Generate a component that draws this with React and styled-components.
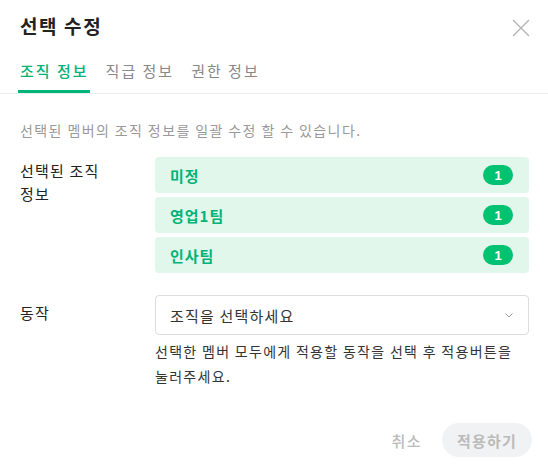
import React from "react";
import styled, { createGlobalStyle } from "styled-components";

const orgs = [
  { name: "미정", count: 1 },
  { name: "영업1팀", count: 1 },
  { name: "인사팀", count: 1 },
];

const tabs = ["조직 정보", "직급 정보", "권한 정보"];

const App = () => {
  return (
    <>
      <GlobalStyle />
      <Dialog>
        <Header>
          <Title>선택 수정</Title>
          <CloseButton aria-label="닫기">
            <svg width="18" height="18" viewBox="0 0 18 18">
              <path d="M1 1 L17 17 M17 1 L1 17" stroke="#b5b5b5" strokeWidth="1.4" fill="none" />
            </svg>
          </CloseButton>
        </Header>
        <TabBar>
          {tabs.map((t, i) => (
            <Tab key={t} active={i === 0}>
              {t}
            </Tab>
          ))}
        </TabBar>
        <Body>
          <Description>선택된 멤버의 조직 정보를 일괄 수정 할 수 있습니다.</Description>
          <FormRow>
            <Label>선택된 조직 정보</Label>
            <OrgList>
              {orgs.map((o) => (
                <OrgItem key={o.name}>
                  <span>{o.name}</span>
                  <Badge>{o.count}</Badge>
                </OrgItem>
              ))}
            </OrgList>
          </FormRow>
          <FormRow>
            <Label className="action">동작</Label>
            <div>
              <Select>
                <span>조직을 선택하세요</span>
                <svg width="8" height="5" viewBox="0 0 8 5">
                  <path d="M0.5 0.5 L4 4 L7.5 0.5" stroke="#999" strokeWidth="1" fill="none" />
                </svg>
              </Select>
              <Help>선택한 멤버 모두에게 적용할 동작을 선택 후 적용버튼을 눌러주세요.</Help>
            </div>
          </FormRow>
        </Body>
        <Footer>
          <TextButton>취소</TextButton>
          <ApplyButton disabled>적용하기</ApplyButton>
        </Footer>
      </Dialog>
    </>
  );
};

export default App;

const GlobalStyle = createGlobalStyle`
  body {
    margin: 0;
    background: #fff;
    font-family: "Noto Sans CJK KR", "Noto Sans", sans-serif;
    word-break: keep-all;
  }
`;

const Dialog = styled.div`
  width: 548px;
  height: 472px;
  display: flex;
  flex-direction: column;
  box-sizing: border-box;
  background: #fff;
`;

const Header = styled.div`
  display: flex;
  justify-content: space-between;
  align-items: center;
  padding: 11px 18px 0 20px;
  height: 30px;
`;

const Title = styled.h2`
  margin: 0;
  font-size: 19px;
  font-weight: 700;
  letter-spacing: 1.6px;
  color: #222;
  line-height: 28px;
`;

const CloseButton = styled.button`
  border: 0;
  background: none;
  padding: 0;
  width: 18px;
  height: 18px;
  display: flex;
  cursor: pointer;
  margin-top: 3px;
`;

const TabBar = styled.div`
  display: flex;
  gap: 14px;
  padding: 0 18px;
  margin-top: 10px;
  border-bottom: 1px solid #eeeeee;
`;

const Tab = styled.div`
  padding: 0 1px 0 2px;
  height: 42px;
  box-sizing: border-box;
  display: flex;
  align-items: center;
  font-size: 15px;
  letter-spacing: 2px;
  color: ${(p) => (p.active ? "#00b377" : "#888")};
  font-weight: ${(p) => (p.active ? 500 : 400)};
  border-bottom: 3px solid ${(p) => (p.active ? "#00b377" : "transparent")};
`;

const Body = styled.div`
  padding: 24px 19px 0 20px;
  display: flex;
  flex-direction: column;
  gap: 22px;
`;

const Description = styled.p`
  margin: 0;
  font-size: 14px;
  letter-spacing: 1.4px;
  color: #999;
  line-height: 24px;
`;

const FormRow = styled.div`
  display: grid;
  grid-template-columns: 100px 1fr;
  column-gap: 35px;
  &:first-of-type {
    margin-top: -7px;
  }
`;

const Label = styled.div`
  font-size: 15px;
  letter-spacing: 1.2px;
  color: #222;
  line-height: 23px;
  padding-top: 2px;
  &.action {
    padding-top: 6px;
  }
`;

const OrgList = styled.div`
  display: flex;
  flex-direction: column;
  gap: 4px;
`;

const OrgItem = styled.div`
  height: 36px;
  display: flex;
  align-items: center;
  justify-content: space-between;
  padding: 0 16px 0 15px;
  background: #e1f7ec;
  border-radius: 4px;
  font-size: 15px;
  font-weight: 700;
  letter-spacing: 1px;
  color: #00b377;
`;

const Badge = styled.span`
  min-width: 30px;
  height: 20px;
  border-radius: 10px;
  background: #00c271;
  color: #fff;
  font-size: 13px;
  font-weight: 700;
  letter-spacing: 0;
  display: flex;
  align-items: center;
  justify-content: center;
  font-family: "Liberation Sans", Arial, sans-serif;
`;

const Select = styled.div`
  height: 40px;
  box-sizing: border-box;
  border: 1px solid #dcdcdc;
  border-radius: 4px;
  display: flex;
  align-items: center;
  justify-content: space-between;
  padding: 0 15px 0 14px;
  font-size: 15px;
  letter-spacing: 1.2px;
  color: #333;
`;

const Help = styled.p`
  margin: 4px 0 0;
  font-size: 14px;
  letter-spacing: 1.3px;
  color: #333;
  line-height: 25px;
`;

const Footer = styled.div`
  margin-top: auto;
  display: flex;
  justify-content: flex-end;
  align-items: center;
  gap: 20px;
  padding: 0 16px 15px;
`;

const TextButton = styled.button`
  border: 0;
  background: none;
  padding: 0;
  font-family: inherit;
  font-size: 15px;
  font-weight: 500;
  letter-spacing: 1.5px;
  color: #bbb;
`;

const ApplyButton = styled.button`
  border: 0;
  width: 90px;
  height: 34px;
  border-radius: 17px;
  background: #f1f2f4;
  font-family: inherit;
  font-size: 15px;
  font-weight: 700;
  letter-spacing: 1.2px;
  color: #bbb;
`;
